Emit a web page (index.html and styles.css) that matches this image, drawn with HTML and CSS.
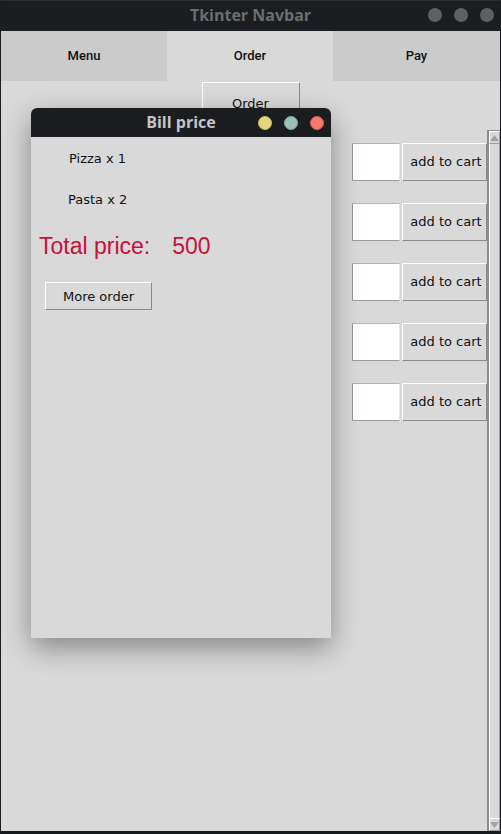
FILE: index.html
```html
<!DOCTYPE html>
<html>
<head>
<meta charset="utf-8">
<link rel="stylesheet" href="styles.css">
</head>
<body>
<div class="app">
  <div class="titlebar">
    <span class="title">Tkinter Navbar</span>
    <div class="dots">
      <span class="dot"></span><span class="dot"></span><span class="dot"></span>
    </div>
  </div>
  <div class="tabs">
    <div class="tab tab-a">Menu</div>
    <div class="tab tab-b active">Order</div>
    <div class="tab tab-c">Pay</div>
  </div>
  <div class="content">
    <div class="order-row"><div class="tkbtn order-btn">Order</div></div>
    <div class="scroll-area">
      <div class="rows">
        <div class="row"><div class="entry"></div><div class="tkbtn cart-btn">add to cart</div></div>
        <div class="row"><div class="entry"></div><div class="tkbtn cart-btn">add to cart</div></div>
        <div class="row"><div class="entry"></div><div class="tkbtn cart-btn">add to cart</div></div>
        <div class="row"><div class="entry"></div><div class="tkbtn cart-btn">add to cart</div></div>
        <div class="row"><div class="entry"></div><div class="tkbtn cart-btn">add to cart</div></div>
      </div>
      <div class="scrollbar">
        <div class="arrow arrow-up"><svg width="9" height="6" viewBox="0 0 9 6"><polygon points="0,6 9,6 4.5,0" fill="#a3a3a3"/></svg></div>
        <div class="slider"></div>
        <div class="arrow arrow-down"><svg width="9" height="6" viewBox="0 0 9 6"><polygon points="0,0 9,0 4.5,6" fill="#a3a3a3"/></svg></div>
      </div>
    </div>

    <div class="bill">
      <div class="bill-title">
        <span class="bill-name">Bill price</span>
        <div class="bill-dots">
          <span class="bdot yellow"></span><span class="bdot teal"></span><span class="bdot red"></span>
        </div>
      </div>
      <div class="bill-body">
        <div class="item item-1">Pizza x 1</div>
        <div class="item item-2">Pasta x 2</div>
        <div class="total"><span>Total price:</span><span>500</span></div>
        <div class="tkbtn more-btn">More order</div>
      </div>
    </div>
  </div>
</div>
</body>
</html>
```

FILE: styles.css
```css
html, body {
  margin: 0;
  padding: 0;
  background: #16181b;
}
body {
  width: 501px;
  height: 834px;
  overflow: hidden;
  font-family: "DejaVu Sans", sans-serif;
}
.app {
  width: 499px;
  height: 831px;
  border-left: 1px solid #1b1d20;
  border-right: 1px solid #1b1d20;
  display: flex;
  flex-direction: column;
  background: #d9d9d9;
}
.titlebar {
  height: 31px;
  flex: none;
  background: #1b1d20;
  border-top: 1px solid #2c2f33;
  box-sizing: border-box;
  display: flex;
  align-items: center;
  justify-content: center;
  position: relative;
}
.title {
  font-family: "Open Sans", sans-serif;
  font-weight: 700;
  font-size: 16px;
  color: #6b6d71;
  margin-top: -2px;
}
.dots {
  position: absolute;
  right: 6px;
  top: 7px;
  display: flex;
  gap: 12px;
}
.dot {
  width: 14px;
  height: 14px;
  border-radius: 50%;
  background: #5e6065;
}
.tabs {
  height: 50px;
  flex: none;
  display: flex;
}
.tab {
  display: flex;
  align-items: center;
  justify-content: center;
  font-family: Roboto, sans-serif;
  font-weight: 500;
  font-size: 13px;
  color: #111;
  background: #cbcbcb;
  padding-bottom: 2px;
  box-sizing: border-box;
}
.tab-a { width: 166px; }
.tab-b { width: 166px; }
.tab-c { flex: 1; }
.tab.active { background: #d9d9d9; }

.content {
  flex: 1;
  position: relative;
  display: flex;
  flex-direction: column;
}
.order-row {
  display: flex;
  justify-content: center;
  padding-top: 1px;
}
.tkbtn {
  box-sizing: border-box;
  border-top: 1px solid #ffffff;
  border-left: 1px solid #ffffff;
  border-right: 1px solid #8a8a8a;
  border-bottom: 1px solid #8a8a8a;
  background: #d9d9d9;
  font-family: "DejaVu Sans", sans-serif;
  font-size: 13px;
  color: #111;
  display: flex;
  align-items: center;
  justify-content: center;
}
.order-btn {
  width: 98px;
  height: 44px;
  padding-bottom: 2px;
}
.scroll-area {
  flex: 1;
  margin-top: 4px;
  display: flex;
  justify-content: flex-end;
}
.rows {
  padding-top: 13px;
  display: flex;
  flex-direction: column;
  gap: 22px;
}
.row {
  display: flex;
  gap: 2px;
  height: 38px;
}
.entry {
  width: 48px;
  box-sizing: border-box;
  background: #ffffff;
  border-top: 1px solid #b5b5b5;
  border-left: 1px solid #9a9a9a;
  border-bottom: 1px solid #9a9a9a;
  border-right: 1px solid #e6e6e6;
}
.cart-btn {
  width: 85px;
  padding-left: 3px;
  padding-bottom: 2px;
}
.scrollbar {
  width: 13px;
  box-sizing: border-box;
  border-left: 2px solid #8d8d8d;
  border-top: 1px solid #8d8d8d;
  display: flex;
  flex-direction: column;
  background: #d9d9d9;
}
.arrow {
  height: 11px;
  flex: none;
  display: flex;
  align-items: center;
  justify-content: center;
  border-top: 1px solid #fff;
  border-left: 1px solid #fff;
  border-bottom: 1px solid #9a9a9a;
  border-right: 1px solid #9a9a9a;
}
.slider {
  flex: 1;
  border-left: 1px solid #fff;
  border-right: 1px solid #9a9a9a;
}

.bill {
  position: absolute;
  left: 30px;
  top: 27px;
  width: 300px;
  height: 530px;
  background: #d9d9d9;
  border-radius: 6px 6px 0 0;
  box-shadow: 0 10px 28px rgba(0, 0, 0, 0.38);
  display: flex;
  flex-direction: column;
}
.bill-title {
  height: 29px;
  flex: none;
  background: #1b1d20;
  border-radius: 6px 6px 0 0;
  display: flex;
  align-items: center;
  justify-content: center;
  position: relative;
}
.bill-name {
  font-family: "Open Sans", sans-serif;
  font-weight: 700;
  font-size: 16px;
  color: #c3c5c7;
  margin-top: -2px;
}
.bill-dots {
  position: absolute;
  right: 7px;
  top: 8px;
  display: flex;
  gap: 12px;
}
.bdot {
  width: 14px;
  height: 14px;
  border-radius: 50%;
  box-sizing: border-box;
}
.yellow { background: #e2d87b; border: 1px solid #c9bd52; }
.teal { background: #9cc0b3; border: 1px solid #86aa9d; }
.red { background: #f57a6e; border: 1px solid #db5d52; }

.bill-body {
  display: flex;
  flex-direction: column;
  align-items: flex-start;
}
.item {
  font-size: 13px;
  color: #111;
  line-height: 15px;
}
.item-1 { margin-top: 14px; margin-left: 38px; }
.item-2 { margin-top: 26px; margin-left: 37px; }
.total {
  margin-top: 26px;
  margin-left: 8px;
  font-family: "Liberation Sans", Arial, sans-serif;
  font-size: 23px;
  line-height: 26px;
  color: #c8103a;
  display: flex;
  gap: 22px;
}
.more-btn {
  margin-top: 23px;
  margin-left: 14px;
  width: 107px;
  height: 28px;
}
```
